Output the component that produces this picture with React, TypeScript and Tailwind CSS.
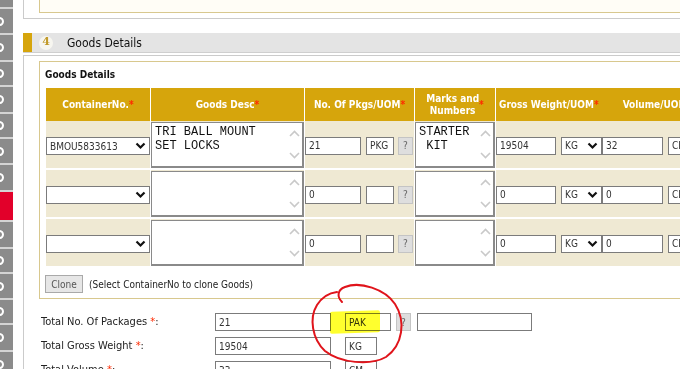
import React from "react";

const Star = () => <span className="text-[#ff2a00]">*</span>;

const Field = ({ className = "", children }: { className?: string; children?: React.ReactNode }) => (
  <div className={`h-[18px] shrink-0 border border-[#7b7b7b] bg-white flex items-center px-[3px] text-[10px] text-[#333] ${className}`}>
    {children}
  </div>
);

const Chevron = () => (
  <svg width="11" height="8" viewBox="0 0 11 8" className="shrink-0">
    <path d="M1.5 1.5 L5.5 5.5 L9.5 1.5" fill="none" stroke="#111" strokeWidth="2.2" />
  </svg>
);

const Select = ({ className = "", value = "" }: { className?: string; value?: string }) => (
  <div className={`h-[18px] shrink-0 border border-[#7b7b7b] bg-white flex items-center justify-between pl-[3px] pr-[3px] text-[10px] text-[#333] ${className}`}>
    <span>{value}</span>
    <Chevron />
  </div>
);

const Help = () => (
  <div className="h-[18px] w-[15px] shrink-0 border border-[#c4c4c4] bg-[#dedede] flex items-center justify-center text-[10px] text-[#666]">
    ?
  </div>
);

const Area = ({ className = "", lines = [] as string[] }) => (
  <div className={`h-[46px] border border-[#8a8a8a] border-b-2 border-r-2 bg-white flex ${className}`}>
    <div className="flex-1 pl-[3px] pt-[2px] font-['Liberation_Mono',monospace] text-[12px] leading-[14px] text-[#111] whitespace-pre">
      {lines.join("\n")}
    </div>
    <div className="w-[15px] shrink-0 flex flex-col items-center justify-between py-[7px]">
      <svg width="11" height="7" viewBox="0 0 11 7">
        <path d="M1 6 L5.5 1.5 L10 6" fill="none" stroke="#c9c9c9" strokeWidth="1.6" />
      </svg>
      <svg width="11" height="7" viewBox="0 0 11 7">
        <path d="M1 1 L5.5 5.5 L10 1" fill="none" stroke="#c9c9c9" strokeWidth="1.6" />
      </svg>
    </div>
  </div>
);

const rows = [
  { cont: "BMOU5833613", desc: ["TRI BALL MOUNT", "SET LOCKS"], pkgs: "21", uom: "PKG", marks: ["STARTER", " KIT"], gross: "19504", vol: "32" },
  { cont: "", desc: [], pkgs: "0", uom: "", marks: [], gross: "0", vol: "0" },
  { cont: "", desc: [], pkgs: "0", uom: "", marks: [], gross: "0", vol: "0" },
];

const sidebar = [
  { h: "h-[7px]", red: false, icon: false },
  { h: "h-[26px]", red: false, icon: true },
  { h: "h-[27px]", red: false, icon: true },
  { h: "h-[25px]", red: false, icon: true },
  { h: "h-[27px]", red: false, icon: true },
  { h: "h-[25px]", red: false, icon: true },
  { h: "h-[26px]", red: false, icon: true },
  { h: "h-[27px]", red: false, icon: true },
  { h: "h-[30px]", red: true, icon: false },
  { h: "h-[27px]", red: false, icon: true },
  { h: "h-[25px]", red: false, icon: true },
  { h: "h-[26px]", red: false, icon: true },
  { h: "h-[25px]", red: false, icon: true },
  { h: "h-[27px]", red: false, icon: true },
  { h: "h-[26px]", red: false, icon: true },
];

export default function App() {
  return (
    <div className="relative w-[680px] h-[369px] overflow-hidden bg-white flex items-start font-['DejaVu_Sans_Condensed','DejaVu_Sans',sans-serif] text-[#222]">
      {/* left nav strip */}
      <div className="w-[13px] shrink-0 flex flex-col">
        {sidebar.map((s, i) => (
          <div
            key={i}
            className={`${s.h} shrink-0 flex items-center ${s.red ? "bg-[#e2002a]" : "bg-[#8b8b8b]"} ${i > 0 ? "border-t-2 border-[#d4d4d4]" : ""}`}
          >
            {s.icon && <div className="w-[9px] h-[9px] -ml-[5px] rounded-full border-[2.5px] border-white" />}
          </div>
        ))}
      </div>

      <div className="ml-[10px] w-[720px] shrink-0">
        {/* previous section tail */}
        <div className="h-[19px] border-l border-b border-[#cbcbcb] pl-[15px]">
          <div className="h-[13px] border-l border-b border-[#d8c88e] bg-[#fffdf6]" />
        </div>

        {/* section header */}
        <div className="mt-[14px] h-[20px] flex border-b border-[#cfcfcf]">
          <div className="w-[9px] shrink-0 bg-[#d6a50c]" />
          <div className="flex-1 bg-[#e4e4e4] flex items-center">
            <div className="ml-[7px] w-[14px] h-[14px] rounded-full bg-[#f7f6f0] flex items-center justify-center font-['DejaVu_Serif',serif] font-bold text-[11px] text-[#c19a2a]">
              4
            </div>
            <span className="ml-[14px] text-[12px] text-[#111]">Goods Details</span>
          </div>
        </div>

        {/* section body */}
        <div className="mt-[2px] h-[330px] border-l border-t border-[#cbcbcb] pl-[15px] pt-[5px]">
          <div className="border-l border-t border-b border-[#d8c88e] pl-[6px] pb-[5px]">
            <div className="mt-[7px] text-[10px] font-bold text-[#111] leading-[12px] -ml-px">Goods Details</div>

            <div className="mt-[7px] flex flex-col">
              {/* table header */}
              <div className="h-[33px] flex gap-px text-white font-bold text-[10px] leading-[12px]">
                <div className="w-[104px] shrink-0 bg-[#d6a50c] flex items-center justify-center">
                  ContainerNo.<Star />
                </div>
                <div className="w-[153px] shrink-0 bg-[#d6a50c] flex items-center justify-center">
                  Goods Desc<Star />
                </div>
                <div className="w-[109px] shrink-0 bg-[#d6a50c] flex items-center justify-center">
                  No. Of Pkgs/UOM<Star />
                </div>
                <div className="w-[80px] shrink-0 bg-[#d6a50c] flex items-center justify-center text-center">
                  Marks and
                  <br />
                  Numbers<Star />
                </div>
                <div className="w-[300px] shrink-0 bg-[#d6a50c] flex items-center pl-[3px] gap-[24px]">
                  <span>
                    Gross Weight/UOM<Star />
                  </span>
                  <span>
                    Volume/UOM<Star />
                  </span>
                </div>
              </div>

              {rows.map((r, i) => (
                <div key={i} className={`h-[47px] flex gap-px ${i > 0 ? "mt-[2px]" : ""}`}>
                  <div className="w-[104px] shrink-0 bg-[#efe9d3] flex items-center pt-[3px]">
                    <Select className="w-[104px]" value={r.cont} />
                  </div>
                  <div className="w-[153px] shrink-0 bg-[#efe9d3] pt-[1px]">
                    <Area lines={r.desc} />
                  </div>
                  <div className="w-[109px] shrink-0 bg-[#efe9d3] flex items-center pt-[2px]">
                    <Field className="w-[56px]">{r.pkgs}</Field>
                    <Field className="ml-[5px] w-[28px]">{r.uom}</Field>
                    <div className="ml-[4px]">
                      <Help />
                    </div>
                  </div>
                  <div className="w-[80px] shrink-0 bg-[#efe9d3] pt-[1px]">
                    <Area lines={r.marks} />
                  </div>
                  <div className="w-[300px] shrink-0 bg-[#efe9d3] flex items-center pt-[2px]">
                    <Field className="w-[60px]">{r.gross}</Field>
                    <Select className="ml-[5px] w-[41px]" value="KG" />
                    <Field className="w-[61px]">{r.vol}</Field>
                    <Field className="ml-[5px] w-[60px]">CM</Field>
                  </div>
                </div>
              ))}
            </div>

            <div className="mt-[9px] flex items-center">
              <div className="h-[18px] w-[38px] -ml-px border border-[#a9a9a9] bg-[#e6e6e6] flex items-center justify-center text-[10px] text-[#555]">
                Clone
              </div>
              <span className="ml-[6px] text-[10px] text-[#222]">(Select ContainerNo to clone Goods)</span>
            </div>
          </div>

          {/* totals */}
          <div className="mt-[14px] pl-[2px] flex flex-col gap-[6px] text-[11px]">
            <div className="flex items-center h-[18px]">
              <span className="w-[174px] shrink-0">
                Total No. Of Packages <Star />:
              </span>
              <Field className="w-[116px]">21</Field>
              <Field className="ml-[14px] w-[46px]">PAK</Field>
              <div className="ml-[5px]">
                <Help />
              </div>
              <Field className="ml-[6px] w-[115px]" />
            </div>
            <div className="flex items-center h-[18px]">
              <span className="w-[174px] shrink-0">
                Total Gross Weight <Star />:
              </span>
              <Field className="w-[116px]">19504</Field>
              <Field className="ml-[14px] w-[32px]">KG</Field>
            </div>
            <div className="flex items-center h-[18px]">
              <span className="w-[174px] shrink-0">
                Total Volume <Star />:
              </span>
              <Field className="w-[116px]">33</Field>
              <Field className="ml-[14px] w-[32px]">CM</Field>
            </div>
          </div>
        </div>
      </div>

      {/* yellow highlighter mark over the UOM box */}
      <div className="absolute left-[330px] top-[311px] w-[50px] h-[22px] bg-[#ffff2e] mix-blend-multiply -skew-y-2 rounded-[2px]" />

      {/* red hand-drawn circle */}
      <svg className="absolute left-0 top-0 pointer-events-none" width="680" height="369" viewBox="0 0 680 369">
        <path
          d="M342 302 C337 297 337 290 345 287 C360 281 385 289 395 304 C406 321 403 345 386 357 C370 366 340 363 325 351 C312 339 309 318 317 305 C322 297 329 293 337 292"
          fill="none"
          stroke="#e0141b"
          strokeWidth="2"
          strokeLinecap="round"
        />
      </svg>
    </div>
  );
}
